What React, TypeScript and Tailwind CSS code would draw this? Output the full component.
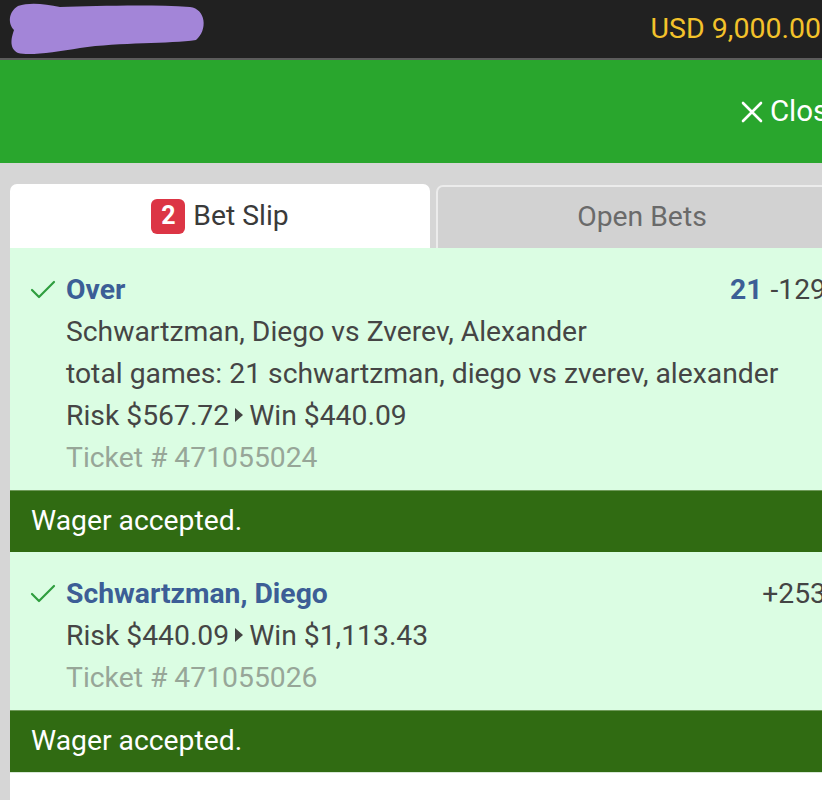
import React from "react";

function Check() {
  return (
    <svg width="26" height="20" viewBox="0 0 26 20" className="shrink-0">
      <polyline points="2,10 9,17 24,2" fill="none" stroke="#2f9e3f" strokeWidth="2.2" strokeLinecap="round" strokeLinejoin="round" />
    </svg>
  );
}

function Arrow() {
  return <span className="inline-block w-0 h-0 border-y-[7px] border-y-transparent border-l-[8px] border-l-[#444] mx-[6px] align-middle relative top-[-2px]" />;
}

function Bet({ title, right, lines, ticket }: { title: string; right: React.ReactNode; lines: React.ReactNode[]; ticket: string }) {
  return (
    <div className="pt-[21px] pb-[11px] pl-[20px] pr-[22px]">
      <div className="flex items-center h-[42px]">
        <div className="w-[36px] flex items-center"><Check /></div>
        <div className="text-[#3c5e96] font-bold flex-1">{title}</div>
        <div>{right}</div>
      </div>
      {lines.map((l, i) => (
        <div key={i} className="pl-[36px] h-[42px] flex items-center text-[#454545] whitespace-nowrap">{l}</div>
      ))}
      <div className="pl-[36px] h-[42px] flex items-center text-[#97a698]">{ticket}</div>
    </div>
  );
}

function Wager() {
  return (
    <div className="h-[62px] bg-[#306b12] border-t border-[#6f9a5a] flex items-center pl-[21px] text-white">
      Wager accepted.
    </div>
  );
}

export default function App() {
  return (
    <div className="w-[822px] h-[800px] overflow-hidden bg-[#d6d6d6] text-[28.3px]" style={{ fontFamily: "Roboto, 'Liberation Sans', sans-serif" }}>
      <div className="h-[58px] bg-[#212121] flex items-center justify-between">
        <svg width="210" height="58" viewBox="0 0 210 58" className="shrink-0">
          <path d="M18 6 C 30 2, 45 4, 60 7 C 95 6, 150 4, 190 7 C 206 9, 208 30, 196 40 C 170 44, 120 42, 80 48 C 55 52, 30 56, 18 53 C 8 48, 12 36, 14 30 C 8 24, 8 12, 18 6 Z" fill="#a385d8" />
        </svg>
        <div className="text-[#f3c22b] text-[28.5px] pr-[1px]">USD 9,000.00</div>
      </div>
      <div className="h-[2px] bg-[#5c5c5c]" />
      <div className="w-[848px] h-[103px] bg-[#29a62d] flex items-center justify-end pr-[4px] text-white text-[29.5px]">
        <svg width="22" height="22" viewBox="0 0 22 22" className="mr-[7px]">
          <path d="M2 2 L20 20 M20 2 L2 20" stroke="white" strokeWidth="2.6" strokeLinecap="round" />
        </svg>
        Close
      </div>
      <div className="w-[848px] pl-[10px] pt-[21px]">
        <div className="flex gap-[6px] items-end">
          <div className="w-[420px] h-[64px] bg-white rounded-t-[7px] flex items-center justify-center text-[#3a3a3a]">
            <span className="w-[34px] h-[35px] rounded-[6px] bg-[#dc3545] text-white font-bold text-[25px] flex items-center justify-center mr-[8px]">2</span>
            Bet Slip
          </div>
          <div className="flex-1 h-[63px] bg-[#d2d2d2] rounded-t-[7px] border-2 border-b-0 border-[#ececec] flex items-center justify-center text-[#6a6a6a]">
            Open Bets
          </div>
        </div>
        <div className="bg-[#dbfde3]">
          <Bet
            title="Over"
            right={<span><span className="font-bold text-[#3c5e96]">21</span><span className="text-[#444] ml-[8px]">-129</span></span>}
            lines={[
              "Schwartzman, Diego vs Zverev, Alexander",
              "total games: 21 schwartzman, diego vs zverev, alexander",
              <span>Risk $567.72<Arrow />Win $440.09</span>,
            ]}
            ticket="Ticket # 471055024"
          />
          <Wager />
          <Bet
            title="Schwartzman, Diego"
            right={<span className="text-[#444]">+253</span>}
            lines={[<span>Risk $440.09<Arrow />Win $1,113.43</span>]}
            ticket="Ticket # 471055026"
          />
          <Wager />
          <div className="h-[40px] bg-white border-t border-[#d8e8d8]" />
        </div>
      </div>
    </div>
  );
}
